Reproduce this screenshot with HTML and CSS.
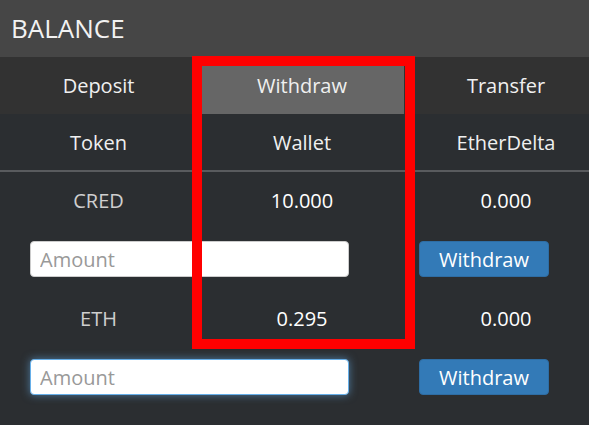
FILE: index.html
```html
<!DOCTYPE html>
<html lang="en">
<head>
    <meta charset="UTF-8">
    <title>Balance</title>
    <link rel="stylesheet" href="styles.css">
</head>
<body>
<div id="balancePanel">
    <div class="panelHeading">BALANCE</div>
    <div class="tabs">
        <div class="tab">Deposit</div>
        <div class="tab active">Withdraw</div>
        <div class="tab">Transfer</div>
    </div>
    <div class="grid headRow">
        <div class="cell">Token</div>
        <div class="cell">Wallet</div>
        <div class="cell">EtherDelta</div>
    </div>
    <div class="grid tokenRow">
        <div class="cell token">CRED</div>
        <div class="cell value">10.000</div>
        <div class="cell value">0.000</div>
    </div>
    <div class="grid formRow">
        <div class="inputCell"><input type="text" class="amount" placeholder="Amount"></div>
        <div class="buttonCell"><button>Withdraw</button></div>
    </div>
    <div class="grid tokenRow">
        <div class="cell token">ETH</div>
        <div class="cell value">0.295</div>
        <div class="cell value">0.000</div>
    </div>
    <div class="grid formRow">
        <div class="inputCell"><input type="text" class="amount focused" placeholder="Amount" autofocus></div>
        <div class="buttonCell"><button>Withdraw</button></div>
    </div>
    <div id="highlight"></div>
</div>
</body>
</html>
```

FILE: styles.css
```css
body {
    margin: 0;
    padding: 0;
    background-color: #2b2e31;
    font-family: 'Open Sans', sans-serif;
    overflow: hidden;
}
#balancePanel {
    position: relative;
    width: 589px;
    height: 425px;
    overflow: hidden;
}
.panelHeading {
    height: 57px;
    line-height: 56px;
    padding-left: 11px;
    background-color: #464646;
    color: #f2f2f2;
    font-size: 26px;
}
.tabs, .grid {
    display: grid;
    grid-template-columns: 203px 204px 204px;
    width: 611px;
    margin-left: -3px;
}
.tabs {
    background-color: #323232;
    height: 57px;
}
.tab {
    display: flex;
    justify-content: center;
    align-items: center;
    color: #f0f0f0;
    font-size: 20px;
}
.tab.active {
    background-color: #666666;
}
.cell {
    display: flex;
    justify-content: center;
    align-items: center;
    font-size: 20px;
    color: #f0f0f0;
}
.headRow {
    height: 56px;
    border-bottom: 2px solid #595b5e;
}
.tokenRow {
    height: 56px;
}
.token {
    color: #cfcfcf;
}
.value {
    color: #ffffff;
}
.formRow {
    height: 62px;
    align-items: center;
}
.inputCell {
    grid-column: span 2;
    padding-left: 33px;
}
.amount {
    box-sizing: border-box;
    width: 319px;
    height: 36px;
    padding: 0 9px;
    border: 1px solid #cccccc;
    border-radius: 4px;
    background-color: #ffffff;
    font-family: 'Open Sans', sans-serif;
    font-size: 20px;
    color: #555555;
    outline: none;
}
.amount::placeholder {
    color: #999999;
}
.amount.focused {
    border-color: #66afe9;
    box-shadow: 0 0 8px rgba(102, 175, 233, 0.6);
}
.buttonCell {
    padding-left: 15px;
}
button {
    width: 130px;
    height: 36px;
    background-color: #337ab7;
    border: 1px solid #2e6da4;
    border-radius: 4px;
    color: #ffffff;
    font-family: 'Open Sans', sans-serif;
    font-size: 20px;
    padding: 0;
}
#highlight {
    position: absolute;
    left: 192px;
    top: 56px;
    width: 203px;
    height: 273px;
    border: 10px solid #ff0000;
}
```
